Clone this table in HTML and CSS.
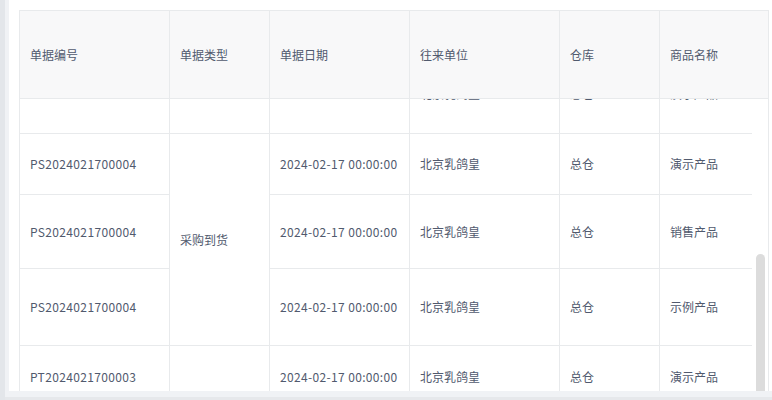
FILE: index.html
```html
<!DOCTYPE html>
<html lang="zh-CN">
<head>
<meta charset="utf-8">
<title>单据列表</title>
<link rel="stylesheet" href="styles.css">
</head>
<body>
<div class="page">
  <div class="edge"></div>
  <div class="main">
    <div class="panel">
      <div class="table-wrap">
        <table class="head-table">
          <colgroup>
            <col class="c1"><col class="c2"><col class="c3"><col class="c4"><col class="c5"><col class="c6h">
          </colgroup>
          <thead>
            <tr class="head-row">
              <th>单据编号</th>
              <th>单据类型</th>
              <th>单据日期</th>
              <th>往来单位</th>
              <th>仓库</th>
              <th class="last">商品名称</th>
            </tr>
          </thead>
        </table>
        <div class="body-area">
          <div class="viewport">
            <table class="body-table">
              <colgroup>
                <col class="c1"><col class="c2"><col class="c3"><col class="c4"><col class="c5"><col class="c6">
              </colgroup>
              <tbody>
                <tr class="r-a">
                  <td class="num">PS2024021700005</td>
                  <td></td>
                  <td class="num">2024-02-17 00:00:00</td>
                  <td>北京乳鸽皇</td>
                  <td>总仓</td>
                  <td class="last">演示产品</td>
                </tr>
                <tr class="r-b">
                  <td class="num">PS2024021700004</td>
                  <td rowspan="3">采购到货</td>
                  <td class="num">2024-02-17 00:00:00</td>
                  <td>北京乳鸽皇</td>
                  <td>总仓</td>
                  <td class="last">演示产品</td>
                </tr>
                <tr class="r-c">
                  <td class="num">PS2024021700004</td>
                  <td class="num">2024-02-17 00:00:00</td>
                  <td>北京乳鸽皇</td>
                  <td>总仓</td>
                  <td class="last">销售产品</td>
                </tr>
                <tr class="r-d">
                  <td class="num">PS2024021700004</td>
                  <td class="num">2024-02-17 00:00:00</td>
                  <td>北京乳鸽皇</td>
                  <td>总仓</td>
                  <td class="last">示例产品</td>
                </tr>
                <tr class="r-e">
                  <td class="num">PT2024021700003</td>
                  <td></td>
                  <td class="num">2024-02-17 00:00:00</td>
                  <td>北京乳鸽皇</td>
                  <td>总仓</td>
                  <td class="last">演示产品</td>
                </tr>
              </tbody>
            </table>
          </div>
          <div class="gutter"><div class="thumb"></div></div>
        </div>
      </div>
    </div>
    <div class="band-light"></div>
    <div class="band-dark"></div>
  </div>
</div>
</body>
</html>
```
FILE: styles.css
```css
html, body {
  margin: 0;
  padding: 0;
}
body {
  width: 772px;
  height: 400px;
  overflow: hidden;
  font-family: "Noto Sans CJK SC", "Noto Sans", sans-serif;
  font-size: 12px;
  color: #515a6e;
  background: #f0f2f5;
}
.page {
  display: flex;
  height: 400px;
}
.edge {
  width: 5px;
  flex: none;
  background: #e3e6ea;
}
.main {
  flex: 1;
  min-width: 0;
  display: flex;
  flex-direction: column;
  padding-left: 4px;
  background: #f0f2f5;
}
.panel {
  height: 391px;
  flex: none;
  background: #fff;
  padding: 10px 0 0 10px;
  box-sizing: border-box;
  overflow: hidden;
}
.band-light {
  height: 6px;
  flex: none;
  background: #f0f2f5;
}
.band-dark {
  height: 3px;
  flex: none;
  background: #e6e8eb;
  margin-left: -4px;
}
.table-wrap {
  width: 750px;
  height: 381px;
  box-sizing: border-box;
  border: 1px solid #e8eaec;
  border-bottom: none;
  display: flex;
  flex-direction: column;
}
table {
  border-collapse: separate;
  border-spacing: 0;
  table-layout: fixed;
}
.head-table {
  width: 748px;
  flex: none;
}
.body-table {
  width: 732px;
  margin-top: -44px;
}
col.c1 { width: 150px; }
col.c2 { width: 100px; }
col.c3 { width: 140px; }
col.c4 { width: 150px; }
col.c5 { width: 100px; }
col.c6 { width: 92px; }
col.c6h { width: 108px; }
th, td {
  box-sizing: border-box;
  padding: 0 10px;
  text-align: left;
  vertical-align: middle;
  white-space: nowrap;
  border-right: 1px solid #e8eaec;
  border-bottom: 1px solid #e8eaec;
  line-height: 18px;
}
td.num {
  letter-spacing: 0.35px;
}
th.last, td.last {
  border-right: none;
}
th {
  font-weight: normal;
  background: #f8f8f9;
  height: 88px;
}
.body-area {
  flex: 1;
  min-height: 0;
  display: flex;
}
.viewport {
  width: 732px;
  flex: none;
  overflow: hidden;
}
.r-a td { height: 79px; }
.r-b td { height: 61px; }
.r-c td { height: 74px; }
.r-d td { height: 77px; }
.r-e td { height: 62px; }
.gutter {
  width: 16px;
  flex: none;
  padding-top: 155px;
  box-sizing: border-box;
}
.thumb {
  margin-left: 4px;
  width: 9px;
  height: 200px;
  background: #dcdcdc;
  border-radius: 5px 5px 0 0;
}
```
